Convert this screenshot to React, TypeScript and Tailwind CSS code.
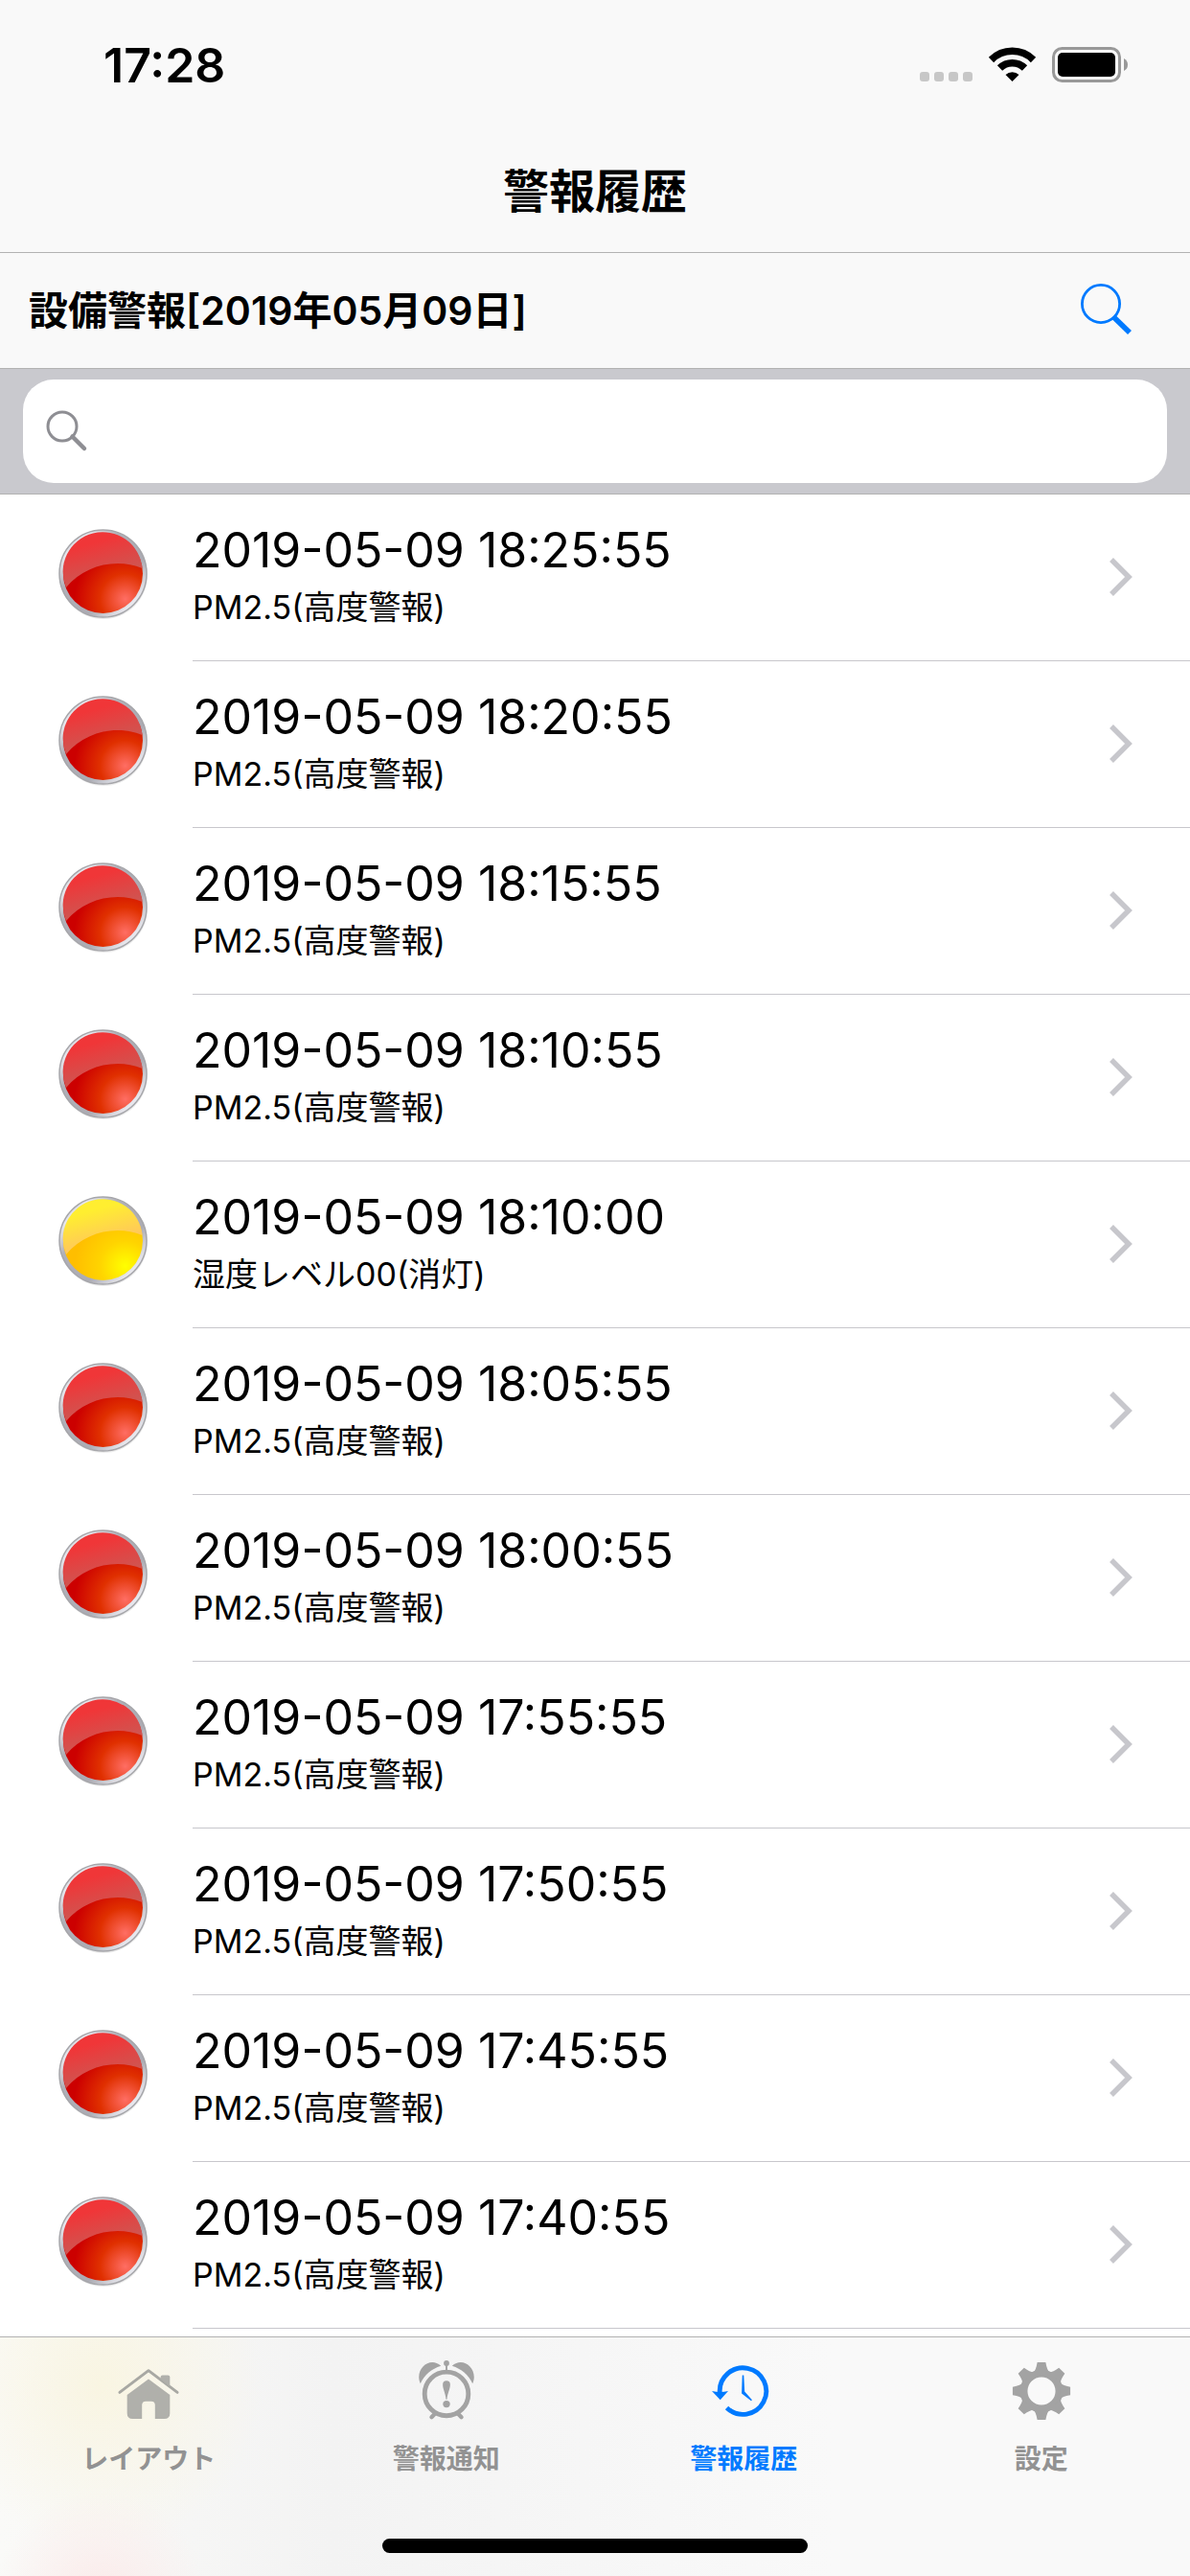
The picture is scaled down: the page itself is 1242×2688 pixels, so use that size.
import React, { useState } from 'react';

type AlarmLevel = 'red' | 'yellow';

interface AlarmRecord {
  time: string;
  message: string;
  level: AlarmLevel;
}

const ALARMS: AlarmRecord[] = [
  { time: '2019-05-09 18:25:55', message: 'PM2.5(高度警報)', level: 'red' },
  { time: '2019-05-09 18:20:55', message: 'PM2.5(高度警報)', level: 'red' },
  { time: '2019-05-09 18:15:55', message: 'PM2.5(高度警報)', level: 'red' },
  { time: '2019-05-09 18:10:55', message: 'PM2.5(高度警報)', level: 'red' },
  { time: '2019-05-09 18:10:00', message: '湿度レベル00(消灯)', level: 'yellow' },
  { time: '2019-05-09 18:05:55', message: 'PM2.5(高度警報)', level: 'red' },
  { time: '2019-05-09 18:00:55', message: 'PM2.5(高度警報)', level: 'red' },
  { time: '2019-05-09 17:55:55', message: 'PM2.5(高度警報)', level: 'red' },
  { time: '2019-05-09 17:50:55', message: 'PM2.5(高度警報)', level: 'red' },
  { time: '2019-05-09 17:45:55', message: 'PM2.5(高度警報)', level: 'red' },
  { time: '2019-05-09 17:40:55', message: 'PM2.5(高度警報)', level: 'red' }
];

export default function App() {
  const [keyword, setKeyword] = useState('');
  const [activeTab, setActiveTab] = useState('history');

  const alarms = ALARMS.filter(a => `${a.time} ${a.message}`.includes(keyword));

  return (
    <div
      lang="ja"
      className="flex min-h-screen flex-col bg-white font-[Inter,'Noto_Sans_CJK_JP',sans-serif] text-black"
    >
      <header className="border-b border-[#b2b2b2] bg-[#f9f9f9]">
        <StatusBar />
        <h1 className="flex h-[127px] items-center justify-center text-[48px] leading-none font-bold">
          警報履歴
        </h1>
      </header>

      <div className="flex h-[121px] items-center justify-between border-b border-[#b2b2b2] bg-[#f9f9f9] pr-[60px] pl-[30px]">
        <h2 className="text-[41px] leading-none font-semibold">設備警報[2019年05月09日]</h2>
        <button type="button" aria-label="検索" className="text-[#007aff]">
          <svg className="h-[56px] w-[56px]" viewBox="0 0 56 56" fill="none" stroke="currentColor">
            <circle cx="23" cy="21" r="19.6" strokeWidth="2.8" />
            <path d="M36.500 35 L53 51" strokeWidth="5.6" />
          </svg>
        </button>
      </div>

      <div className="border-b border-[#b2b2b2] bg-[#c9c9ce] px-6 py-[11px]">
        <label className="flex h-[108px] items-center gap-4 rounded-[32px] bg-white px-6">
          <svg className="h-[44px] w-[44px] text-[#8e8e93]" viewBox="0 0 44 44" fill="none" stroke="currentColor">
            <circle cx="17" cy="17" r="15" strokeWidth="3" />
            <path d="M27.5 27.5 L40 40" strokeWidth="4.5" strokeLinecap="round" />
          </svg>
          <input
            type="search"
            aria-label="キーワード"
            value={keyword}
            onChange={e => setKeyword(e.target.value)}
            className="min-w-0 flex-1 text-[50px] outline-none"
          />
        </label>
      </div>

      <ul className="flex-1">
        {alarms.map(alarm => (
          <AlarmRow key={alarm.time} alarm={alarm} />
        ))}
      </ul>

      <TabBar active={activeTab} onChange={setActiveTab} />
    </div>
  );
}

// ステータスバー
const StatusBar: React.FC = () => (
  <div className="flex h-[136px] items-center justify-between pr-[62px] pl-[108px]">
    <span className="text-[50px] leading-none font-semibold">17:28</span>
    <svg className="h-[48px] w-[220px]" viewBox="0 0 220 48">
      <g fill="#c7c7c7">
        <rect x="0" y="31" width="10" height="10" rx="3" />
        <rect x="15" y="31" width="10" height="10" rx="3" />
        <rect x="30" y="31" width="10" height="10" rx="3" />
        <rect x="45" y="31" width="10" height="10" rx="3" />
      </g>
      <g fill="none" stroke="#000" strokeWidth="7.5">
        <path d="M74.500 18.500 A31 31 0 0 1 118.500 18.500" />
        <path d="M83.500 27 A18.500 18.500 0 0 1 109.500 27" />
      </g>
      <path d="M96.500 41 L89.500 34 A10 10 0 0 1 103.500 34 Z" />
      <rect x="139.500" y="6.500" width="69" height="34" rx="9" fill="none" stroke="#999" strokeWidth="3" />
      <rect x="144" y="11" width="60" height="25" rx="5" />
      <path d="M213 17 Q217 19 217 23.500 Q217 28 213 30 Z" fill="#999" />
    </svg>
  </div>
);

// アラーム1件分の行
const AlarmRow: React.FC<{ alarm: AlarmRecord }> = ({ alarm }) => (
  <li>
    <a href="#detail" className="flex h-[174px] pl-[57px]">
      <div className="w-[144px] shrink-0 pt-[36px]">
        <Lamp level={alarm.level} />
      </div>
      <div className="flex flex-1 items-center justify-between border-b border-[#c8c7cc] pr-[60px] pb-[2px]">
        <div>
          <p className="text-[50px] leading-[64px]">{alarm.time}</p>
          <p className="text-[34px] leading-[56px]">{alarm.message}</p>
        </div>
        <svg className="h-[40px] w-[24px]" viewBox="0 0 24 40" fill="none" stroke="#c7c7cc" strokeWidth="5.5">
          <path d="M2 2 L20 20 L2 38" />
        </svg>
      </div>
    </a>
  </li>
);

const LAMP_COLORS = {
  red: { edge: '#cc0000', mid: '#e03000', glow: '#ff6e64', gloss: '#f03638', glossEnd: '#d05450' },
  yellow: { edge: '#ffbe00', mid: '#ffd400', glow: '#ffff00', gloss: '#ffee30', glossEnd: '#ffc85a' }
};

// 光沢のある警報ランプ
const Lamp: React.FC<{ level: AlarmLevel }> = ({ level }) => {
  const colors = LAMP_COLORS[level];

  return (
    <svg className="h-[98px] w-[98px]" viewBox="0 0 98 98">
      <defs>
        <linearGradient id="rim" x1="0" y1="0" x2="1" y2="1">
          <stop offset="0" stopColor="#a0a0a8" />
          <stop offset="0.18" stopColor="#e8e8ee" />
          <stop offset="0.35" stopColor="#b0b0b8" />
          <stop offset="0.65" stopColor="#acacb4" />
          <stop offset="0.85" stopColor="#ececf2" />
          <stop offset="1" stopColor="#a0a0a8" />
        </linearGradient>
        <radialGradient id={`body-${level}`} cx="0.78" cy="0.82" r="0.64">
          <stop offset="0" stopColor={colors.glow} />
          <stop offset="0.5" stopColor={colors.mid} />
          <stop offset="1" stopColor={colors.edge} />
        </radialGradient>
        <linearGradient id={`gloss-${level}`} x1="0.3" y1="0" x2="0.7" y2="1">
          <stop offset="0.2" stopColor={colors.gloss} />
          <stop offset="0.75" stopColor={colors.glossEnd} />
        </linearGradient>
      </defs>
      <circle cx="51" cy="48" r="46" fill="#000" opacity="0.08" />
      <circle cx="50.5" cy="46.5" r="45.5" fill="url(#rim)" stroke="#a6a6aa" strokeWidth="1.5" />
      <circle cx="50.5" cy="46.5" r="41.5" fill={`url(#body-${level})`} />
      <path
        d="M12 61 A41.500 41.500 0 1 1 91.500 41 C64 30 31 38 12 61 Z"
        fill={`url(#gloss-${level})`}
      />
    </svg>
  );
};

interface TabBarProps {
  active: string;
  onChange: (id: string) => void;
}

const TabBar: React.FC<TabBarProps> = ({ active, onChange }) => {
  const tabs = [
    { id: 'layout', label: 'レイアウト', icon: <HomeIcon /> },
    { id: 'notice', label: '警報通知', icon: <AlarmIcon /> },
    { id: 'history', label: '警報履歴', icon: <HistoryIcon /> },
    { id: 'settings', label: '設定', icon: <GearIcon /> }
  ];

  return (
    <nav className="border-t border-[#b2b2b2] bg-[#f8f8f8] bg-[radial-gradient(circle_at_105px_270px,#fbebea_0,transparent_110px),radial-gradient(circle_at_105px_50px,#f9f5e2_0,transparent_170px),linear-gradient(to_right,#fafaf8_0,#f3f3f3_28%,#f9f9f9_70%)]">
      <div className="grid grid-cols-4">
        {tabs.map(tab => (
          <button
            key={tab.id}
            type="button"
            onClick={() => onChange(tab.id)}
            className={`flex h-[147px] flex-col items-center gap-[18px] pt-[23px] ${
              tab.id === active ? 'text-[#007aff]' : 'text-[#929292]'
            }`}
          >
            {tab.icon}
            <span className="text-[28px] leading-[40px] font-semibold">{tab.label}</span>
          </button>
        ))}
      </div>
      <div className="flex h-[102px] items-end justify-center pb-6">
        <div className="h-[15px] w-[444px] rounded-full bg-black" />
      </div>
    </nav>
  );
};

const HomeIcon: React.FC = () => (
  <svg className="h-[68px] w-[68px]" viewBox="0 0 68 68" fill="#b0b0ab">
    <path d="M3 35.500 L34 12 L65 35.500" fill="none" stroke="#a8a8a3" strokeWidth="3" strokeLinecap="round" strokeLinejoin="round" />
    <path d="M47 21 V19 Q47 17 49 17 H55 Q57 17 57 19 V29 Z" />
    <path d="M34 21 L57 38 V58 Q57 64 51 64 H41 V49 Q41 45 37 45 H31 Q27 45 27 49 V64 H17 Q11 64 11 58 V38 Z" />
  </svg>
);

const AlarmIcon: React.FC = () => (
  <svg className="h-[68px] w-[68px]" viewBox="0 0 68 68" fill="#a3a3a3" stroke="#a3a3a3">
    <circle cx="34" cy="37" r="23.5" fill="none" strokeWidth="5" />
    <g stroke="none">
      <circle cx="34" cy="4" r="3" />
      <path d="M6 26 C-1 11 16 -4 28 7 C18 10 10 17 6 26 Z" />
      <path d="M62 26 C69 11 52 -4 40 7 C50 10 58 17 62 26 Z" />
      <path d="M30 27 Q30 23 34 23 Q38 23 38 27 C38 32 35 36 34.500 43 H33.500 C33 36 30 32 30 27 Z" />
      <circle cx="34" cy="48" r="3.8" />
    </g>
    <path d="M34 4 V12" strokeWidth="2" />
    <path d="M22 58 L18 62 M46 58 L50 62" strokeWidth="4.5" strokeLinecap="round" />
  </svg>
);

const HistoryIcon: React.FC = () => (
  <svg className="h-[68px] w-[68px]" viewBox="0 0 68 68" fill="currentColor">
    <path d="M8.500 36 A25 25 0 1 1 16 52" fill="none" stroke="currentColor" strokeWidth="5" />
    <path d="M0 34 Q9 36 17.500 34 L9 43.500 Z" />
    <path d="M32.700 17 H34.300 L35.200 34.500 L43.200 43.500 L42.200 44.500 L32 36.500 Z" />
  </svg>
);

const GearIcon: React.FC = () => (
  <svg className="h-[68px] w-[68px]" viewBox="0 0 68 68" fill="#a3a3a3">
    <g transform="translate(34 34)">
      <circle r="19" fill="none" stroke="#a3a3a3" strokeWidth="8" />
      {[0, 45, 90, 135, 180, 225, 270, 315].map(angle => (
        <path key={angle} d="M-9 -20 Q-6 -22 -4.500 -31 H4.500 Q6 -22 9 -20 Z" transform={`rotate(${angle})`} />
      ))}
    </g>
  </svg>
);
